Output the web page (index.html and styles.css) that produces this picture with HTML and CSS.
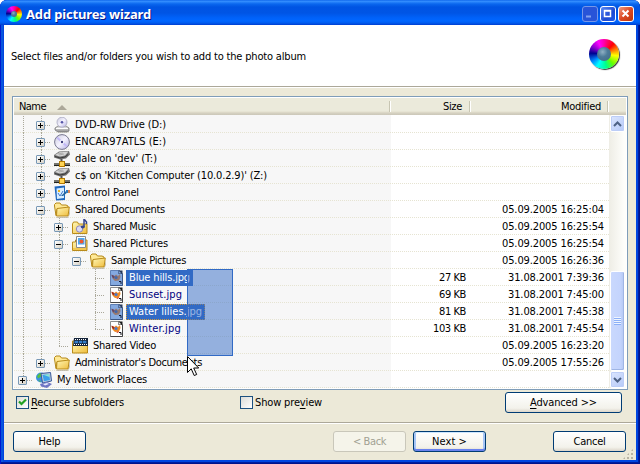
FILE: index.html
```html
<!DOCTYPE html>
<html lang="en">
<head>
<meta charset="utf-8">
<title>Add pictures wizard</title>
<link rel="stylesheet" href="styles.css">
</head>
<body>
<svg class="defs" width="0" height="0">
  <defs>
    <linearGradient id="gold" x1="0" y1="0" x2="1" y2="1"><stop offset="0" stop-color="#fff8b8"/><stop offset="1" stop-color="#efbc3c"/></linearGradient>
    <linearGradient id="disc" x1="0" y1="0" x2="1" y2="1"><stop offset="0" stop-color="#c9c9dc"/><stop offset=".5" stop-color="#f4f2ff"/><stop offset="1" stop-color="#b2aee0"/></linearGradient>
    <linearGradient id="metal" x1="0" y1="0" x2="0" y2="1"><stop offset="0" stop-color="#f2f2f2"/><stop offset="1" stop-color="#8c8c8c"/></linearGradient>
    <symbol id="dvd" viewBox="0 0 16 16"><path d="M1 11l3-2h8l3 2v3l-2 1H4l-3-2z" fill="url(#metal)" stroke="#777" stroke-width=".8"/><path d="M2 11.5h12" stroke="#fff"/><circle cx="8" cy="5.2" r="5" fill="url(#disc)" stroke="#a9a9c0" stroke-width=".8"/><circle cx="8" cy="5.2" r="1.3" fill="#5656a8"/></symbol>
    <symbol id="cd" viewBox="0 0 16 16"><circle cx="8" cy="8" r="7.4" fill="url(#disc)" stroke="#77778e"/><path d="M8 8L3 3.500M8 8l5 4.500" stroke="#c3b9f6" stroke-width="2"/><circle cx="8" cy="8" r="2.200" fill="#f7f7ff"/><circle cx="8" cy="8" r="1.200" fill="#3d3d7d"/></symbol>
    <symbol id="netdrive" viewBox="0 0 16 16"><path d="M0 4l5-3.500L15 0l1 3.500-4 4-6 1-6-2z" fill="#747474"/><path d="M1 4l4.500-2.800 9-.6-3.500 4-5 .8z" fill="#d6d6d6"/><path d="M4 3l5-1M5 4l5-1" stroke="#9a9a9a" stroke-width=".7"/><path d="M1 5.500l5 1.500 5-1 3-2.500" stroke="#3a3a3a" fill="none"/><path d="M7.500 8v3" stroke="#555" stroke-width="2"/><path d="M0 13.500h16" stroke="#222" stroke-width="3"/><path d="M0 13h16" stroke="#c8c8b8"/><rect x="5.500" y="10.500" width="5" height="5" fill="#ffd557" stroke="#b47a00"/></symbol>
    <symbol id="panel" viewBox="0 0 16 16"><path d="M.500 1.500L11 .500v14.500L2 15.500z" fill="#1e67bf"/><path d="M2.500 3.500L10 2.500v10.500l-7 1z" fill="#d8edff"/><path d="M4 8l2 3 3-5" stroke="#3f7ad0" fill="none"/><path d="M4 6h2" stroke="#e9b421" stroke-width="2"/><path d="M7 11l5-5 2 1-5 4z" fill="#23659f"/><path d="M12 5h3v3h-3z" fill="#2f7cc0"/><path d="M14 5h2v3h-2z" fill="#d78354"/></symbol>
    <symbol id="folder" viewBox="0 0 16 16"><path d="M2 15h12l2-8v5l-2 4H3z" fill="#a8a08a" opacity=".6"/><path d="M.5 4V2.500L2 1h4l1.500 2H12L14 4v3H3L2 13.500z" fill="#ffe995" stroke="#b48819"/><path d="M3 6.500L15.300 5 14 14H2.500z" fill="url(#gold)" stroke="#b98b1a"/></symbol>
    <symbol id="music" viewBox="0 0 16 16"><path d="M.500 14.500V5l1-2h4l1 2H15v9.500H.500z" fill="url(#gold)" stroke="#b98b1a"/><circle cx="7.500" cy="10" r="3.200" fill="#dbd8f3" stroke="#8e88bd"/><path d="M12 8V0l2.500 3v2" stroke="#36448e" stroke-width="1.500" fill="none"/><ellipse cx="10.800" cy="8" rx="2" ry="1.400" fill="#36448e"/></symbol>
    <symbol id="pics" viewBox="0 0 16 16"><path d="M.500 14.500V6h3V4H15v10.500z" fill="url(#gold)" stroke="#b98b1a"/><path d="M4.500.500h9v11h-9z" fill="#fff" stroke="#8a8a8a"/><path d="M6 2h6.500v6.500H6z" fill="#4fa8ef"/><circle cx="9.500" cy="5.500" r="2" fill="#ef5630"/><path d="M1 13h13" stroke="#f3c850" stroke-width="2"/></symbol>
    <symbol id="video" viewBox="0 0 16 16"><path d="M.500 15V3h15v12z" fill="url(#gold)" stroke="#b98b1a"/><path d="M2 0h14v8H1z" fill="#15243a"/><path d="M3 1.500h12" stroke="#fff" stroke-dasharray="1 1"/><path d="M2.500 4h12.500" stroke="#347dc8" stroke-width="2.500" stroke-dasharray="3.500 .7"/><path d="M2 6.500h13" stroke="#fff" stroke-dasharray="1 1"/></symbol>
    <symbol id="file" viewBox="0 0 16 16"><path d="M2.500.500h9l3 3v12h-12z" fill="#fff" stroke="#8c8c8c"/><path d="M14.500 4v11.500h-12" fill="none" stroke="#444"/><path d="M10.500.500h4v3.500h-4z" fill="#1c1c1c"/><path d="M11 1v2.500h2.500z" fill="#eee"/><path d="M3.500 5l3 1 1.500-1.500L10 6l2-2 .500 3-1.500 3.500L7 11 4.500 8.500z" fill="#f08a24"/><path d="M3.500 4.500l3 1.500L6 8.500 4 7z" fill="#a62c17"/><path d="M8 11l3-1-1 2z" fill="#d03a1c"/><circle cx="8" cy="7.500" r="1.600" fill="#4a78c9"/><path d="M11 11.500h2V14" stroke="#101018" fill="none"/></symbol>
    <symbol id="filesel" viewBox="0 0 16 16"><path d="M2.500.500h9l3 3v12h-12z" fill="#84a9e0" stroke="#5f7fb4"/><path d="M14.500 4v11.500h-12" fill="none" stroke="#3b5685"/><path d="M10.500.500h4v3.500h-4z" fill="#26395a"/><path d="M11 1v2.500h2.500z" fill="#7ea2d8"/><path d="M3.500 5l3 1 1.500-1.500L10 6l2-2 .500 3-1.500 3.500L7 11 4.500 8.500z" fill="#97796f"/><path d="M3.500 4.500l3 1.500L6 8.500 4 7z" fill="#654869"/><circle cx="8" cy="7.500" r="1.600" fill="#4067ae"/><path d="M11 11.500h2V14" stroke="#101830" fill="none"/></symbol>
    <symbol id="network" viewBox="0 0 16 16"><circle cx="5" cy="5.500" r="5" fill="#3c91e2"/><path d="M1 4l3-3 2 .500-1 3-3 2zM2 8l3 1-1 1z" fill="#57c041"/><path d="M5 1.500L14.500 .500l1 8.500-9 2z" fill="#b9cbe0" stroke="#39599a"/><path d="M6.500 3l6.500-1 1 6-6 1.200z" fill="#3aa0ea"/><path d="M8 3l5-1 .5 3z" fill="#8ee6cf"/><path d="M4 12l7-2 5 2-5 4-6-1.500z" fill="#6f76c4"/><path d="M7 12l4-1 2 1-4 1.500z" fill="#e5e7fb"/></symbol>
  </defs>
</svg>
<div class="window">
  <header class="titlebar">
    <span class="wheel small"></span>
    <h1 class="caption" data-w="125">Add pictures wizard</h1>
    <div class="controls">
      <span class="ctl dim"><svg width="14" height="14"><path d="M3 9.500h5" stroke="#84a2f0" stroke-width="2"/></svg></span>
      <span class="ctl"><svg width="14" height="14"><path d="M3.500 3.500h6v6h-6zM3.500 4h6" fill="none" stroke="#fff" stroke-width="1.500"/></svg></span>
      <span class="ctl close"><svg width="14" height="14"><path d="M3.500 3.500l6 6M9.500 3.500l-6 6" stroke="#fff" stroke-width="2"/></svg></span>
    </div>
  </header>
  <main class="client">
    <section class="banner">
      <p data-w="295">Select files and/or folders you wish to add to the photo album</p>
      <span class="wheel"></span>
    </section>
    <section class="body">
      <div class="list">
        <div class="head">
          <div class="h-name"><span data-w="27">Name</span><i class="sort"></i></div>
          <div class="h-size"><span data-w="19">Size</span></div>
          <div class="h-mod"><span data-w="40">Modified</span></div>
        </div>
        <div class="view">
          <div class="rows" id="rows"></div>
          <div class="scroll">
            <span class="sbtn"><svg width="9" height="6"><path d="M1 5l3.500-3.500L8 5" fill="none" stroke="#4d6185" stroke-width="2"/></svg></span>
            <span class="track"></span>
            <span class="thumb"><i></i></span>
            <span class="sbtn"><svg width="9" height="6"><path d="M1 1l3.500 3.500L8 1" fill="none" stroke="#4d6185" stroke-width="2"/></svg></span>
          </div>
        </div>
      </div>
      <div class="options">
        <label class="opt first"><span class="box"><svg width="9" height="9"><path d="M1 3.500L3.500 6 8 1.500" fill="none" stroke="#21a121" stroke-width="2.200"/></svg></span><span data-w="93"><u>R</u>ecurse subfolders</span></label>
        <label class="opt second"><span class="box"></span><span data-w="67">Show pre<u>v</u>iew</span></label>
        <button class="btn wide"><span data-w="67"><u>A</u>dvanced &gt;&gt;</span></button>
      </div>
    </section>
    <footer class="foot">
      <button class="btn"><span data-w="22">Help</span></button>
      <button class="btn back off"><span data-w="33">&lt; Back</span></button>
      <button class="btn next"><span data-w="35">Next &gt;</span></button>
      <button class="btn cancel"><span data-w="32">Cancel</span></button>
      <i class="grip"></i>
    </footer>
  </main>
  <div class="marquee"></div>
  <svg class="cursor" width="13" height="21" viewBox="0 0 13 21"><path d="M.500.500v16l3.700-3.700 3 6.700 2.500-1-3-6.500h5z" fill="#fff" stroke="#000"/></svg>
</div>
<script src="script.js"></script>
</body>
</html>
```
FILE: styles.css
```css
* { box-sizing: border-box; }
body {
  margin: 0;
  width: 640px;
  height: 464px;
  overflow: hidden;
  background: #fff;
  font: 11px/14px "DejaVu Sans Condensed", "DejaVu Sans", sans-serif;
  font-stretch: condensed;
  color: #000;
}
.defs { position: absolute; }
p, h1 { margin: 0; }
[data-w] { white-space: nowrap; }
svg { display: block; flex: none; }
u { text-underline-offset: 2px; text-decoration-thickness: 1px; }

.window {
  position: relative;
  width: 640px;
  height: 464px;
  padding: 0 4px 4px;
  border-radius: 7px 7px 0 0;
  background: #0046e0;
  box-shadow: inset 1px 0 #0019cf, inset -1px -1px #00138c, inset -2px -2px #001ea0, inset 3px 0 #0855dd;
  overflow: hidden;
}
.titlebar {
  display: flex;
  align-items: center;
  height: 25px;
  margin: 0 -4px;
  padding: 3px 6px 0;
  background: linear-gradient(#0058e6 0, #3a93ff 1px, #2884fb 2px, #0a67ee 4px, #0054e3 7px, #0055e5 13px, #0062fa 18px, #0066ff 21px, #005bee 23px, #003dd0 25px);
}
.caption {
  margin-left: 4px;
  font: bold 13px/18px "Noto Sans", sans-serif;
  color: #fff;
  text-shadow: 1px 1px #0a1883;
}
.controls { display: flex; gap: 2px; margin: 0 0 0 auto; }
.ctl {
  width: 16px;
  height: 16px;
  border: 1px solid #fff;
  border-radius: 3px;
  background: linear-gradient(135deg, #5c8bf5, #1d49d2 60%, #1f5cec);
}
.ctl.dim { border-color: #7797e8; background: #2854d8; }
.ctl.close { background: linear-gradient(135deg, #f19a80, #dc4a24 50%, #bc3309); }
.wheel {
  display: flex;
  flex: none;
  align-items: center;
  justify-content: center;
  width: 30px;
  height: 30px;
  border-radius: 50%;
  background: conic-gradient(#f0a 0, #f00 12%, #ff6a00 18%, #ff0 27%, #6f0 38%, #0f8 47%, #0ff 58%, #08f 66%, #000090 76%, #80c 84%, #f0f 93%, #f0a);
  box-shadow: 1px 1px 1px #333;
}
.wheel::after {
  content: "";
  width: 14px;
  height: 14px;
  border-radius: 50%;
  background: radial-gradient(circle at 40% 35%, #8fb0c4, #4d7b99 40%, #416880);
}
.wheel.small { width: 16px; height: 16px; box-shadow: none; }
.wheel.small::after { width: 6px; height: 6px; }

.client { height: 435px; background: #ece9d8; }
.banner {
  display: flex;
  align-items: center;
  justify-content: space-between;
  height: 62px;
  padding: 0 17px 3px 7px;
  background: #fff;
  border-bottom: 1px solid #aca899;
}
.banner p { padding-top: 5px; }
.body {
  height: 335px;
  padding: 8px 8px 0;
  border-top: 1px solid #fff;
}
.list {
  width: 616px;
  height: 294px;
  border: 1px solid #7f9db9;
  padding: 1px;
  background: #fff;
}
.head {
  display: flex;
  height: 17px;
  background: linear-gradient(#ebeadb 13px, #e2decd 14px, #d6d2c2 15px, #cbc7b8 17px);
}
.head > div {
  display: flex;
  align-items: center;
  position: relative;
  padding-top: 1px;
}
.head > div::after {
  content: "";
  position: absolute;
  right: 0;
  top: 3px;
  width: 2px;
  height: 11px;
  background: linear-gradient(90deg, #c7c5b2 50%, #fff 50%);
}
.h-name { width: 377px; padding-left: 5px; }
.h-size { width: 80px; justify-content: flex-end; padding-right: 9px; }
.h-mod { width: 138px; justify-content: flex-end; padding-right: 8px; }
.sort {
  margin-left: 11px;
  border: 5px solid transparent;
  border-top: 0;
  border-bottom-color: #aca899;
}
.view { display: flex; height: 273px; }
.rows {
  width: 595px;
  padding-top: 1px;
  background: linear-gradient(90deg, #f7f7f7 377px, #fff 377px);
}
.row {
  display: flex;
  height: 17px;
  align-items: center;
  background: repeating-linear-gradient(90deg, #e6e4d2 0 1px, transparent 1px 2px) 0 100% / 100% 1px no-repeat;
}
.name { display: flex; align-items: center; width: 377px; height: 17px; }
.size { width: 75px; display: flex; justify-content: flex-end; }
.date { width: 138px; display: flex; justify-content: flex-end; }
.cell { flex: none; position: relative; width: 18px; height: 17px; }
.cell.v, .cell.end {
  background: repeating-linear-gradient(#aaa89a 0 1px, transparent 1px 2px) 9px 0 / 1px 100% no-repeat;
}
.cell.end { background-size: 1px 9px; }
.cell.tick::before {
  content: "";
  position: absolute;
  left: 9px;
  top: 9px;
  width: 10px;
  height: 1px;
  background: repeating-linear-gradient(90deg, #aaa89a 0 1px, transparent 1px 2px);
}
.pm {
  position: absolute;
  left: 4px;
  top: 5px;
  width: 9px;
  height: 9px;
  border: 1px solid #7898b5;
  border-radius: 1px;
  background: linear-gradient(#000, #000) 1px 3px / 5px 1px no-repeat, linear-gradient(135deg, #fff, #d5d0c4);
}
.pm.plus {
  background: linear-gradient(#000, #000) 1px 3px / 5px 1px no-repeat, linear-gradient(#000, #000) 3px 1px / 1px 5px no-repeat, linear-gradient(135deg, #fff, #d5d0c4);
}
.icon { margin: 1px 2px 0 4px; width: 16px; height: 16px; }
.text { height: 16px; line-height: 15px; padding: 0 3px; }
.text.jpg { color: #000080; }
.text.sel { background: #316ac5; color: #fff; }
.text.focus { outline: 1px dotted #ce953a; outline-offset: -1px; }

.scroll {
  display: flex;
  flex-direction: column;
  width: 17px;
  padding: 0 1px;
  background: linear-gradient(90deg, #eeede5, #fefefb 90%);
}
.sbtn, .thumb {
  display: flex;
  align-items: center;
  justify-content: center;
  width: 15px;
  height: 17px;
  border: 1px solid #fff;
  border-radius: 2px;
  background: linear-gradient(135deg, #dce6ff, #b5c9f8);
  box-shadow: inset 0 0 0 1px #bccdf7;
}
.track { height: 139px; }
.thumb { height: 100px; background: linear-gradient(90deg, #c9d8fd, #c4d4fd 70%, #b3c7f3); box-shadow: inset -1px -1px #9fb5e5; }
.thumb i { width: 7px; height: 8px; background: repeating-linear-gradient(#eef4fe 0 1px, #8cb0f8 1px 2px); }

.options { display: flex; padding-top: 2px; }
.opt { display: flex; gap: 3px; height: 13px; align-items: center; margin-top: 4px; }
.opt.first { width: 224px; margin-left: 4px; }
.opt.second { width: 265px; }
.box {
  display: flex;
  align-items: center;
  justify-content: center;
  width: 13px;
  height: 13px;
  margin-right: -1px;
  border: 1px solid #1c5180;
  background: linear-gradient(135deg, #dcdcd7, #fff);
}
.btn {
  display: flex;
  align-items: center;
  justify-content: center;
  flex: none;
  width: 73px;
  height: 21px;
  padding: 0;
  border: 1px solid #003c74;
  border-radius: 3px;
  background: linear-gradient(#fff, #f3f2eb 80%, #dcd6ca);
  font: inherit;
  color: #000;
}
.wide { width: 117px; }
.foot {
  display: flex;
  height: 38px;
  padding: 8px 0 0 9px;
  border-top: 1px solid #aca899;
  box-shadow: inset 0 1px #fff;
  position: relative;
}
.back { margin-left: 247px; }
.next { margin-left: 7px; box-shadow: inset 0 1px #cee7ff, inset 0 -2px #6982ee, inset 2px 0 #a6c5f6, inset -2px 0 #a6c5f6; }
.cancel { margin-left: 67px; }
.off { color: #a1a192; border-color: #c9c7ba; background: #f5f4ea; }
.grip {
  position: absolute;
  right: 1px;
  bottom: 1px;
  width: 12px;
  height: 12px;
  background: conic-gradient(from 0deg at 50% 50%, #b8b4a3 0 25%, transparent 0) -2px 2px / 4px 4px;
  clip-path: polygon(100% 0, 100% 100%, 0 100%);
}
.marquee {
  position: absolute;
  left: 187px;
  top: 269px;
  width: 46px;
  height: 87px;
  border: 1px solid #316ac5;
  background: rgba(49, 106, 197, .5);
}
.cursor { position: absolute; left: 187px; top: 356px; }
```
FILE: script.js
```js
// g: one letter per indent cell. v = guide line, x = blank, t = tick, e = last tick,
// p/m = plus/minus box on a continuing line, P/M = plus/minus box with no line below.
const data = [
  { g: 'vp', icon: 'dvd', text: 'DVD-RW Drive (D:)', w: 91 },
  { g: 'vp', icon: 'cd', text: 'ENCAR97ATLS (E:)', w: 91 },
  { g: 'vp', icon: 'netdrive', text: "dale on 'dev' (T:)", w: 82 },
  { g: 'vp', icon: 'netdrive', text: "c$ on 'Kitchen Computer (10.0.2.9)' (Z:)", w: 192 },
  { g: 'vp', icon: 'panel', text: 'Control Panel', w: 64 },
  { g: 'vm', icon: 'folder', text: 'Shared Documents', w: 90, date: '05.09.2005 16:25:04' },
  { g: 'vvp', icon: 'music', text: 'Shared Music', w: 63, date: '05.09.2005 16:25:54' },
  { g: 'vvm', icon: 'pics', text: 'Shared Pictures', w: 75, date: '05.09.2005 16:25:54' },
  { g: 'vvvM', icon: 'folder', text: 'Sample Pictures', w: 75, date: '05.09.2005 16:26:36' },
  { g: 'vvvxt', icon: 'filesel', text: 'Blue hills.jpg', w: 61, size: '27 KB', sw: 27, date: '31.08.2001 7:39:36', cls: 'jpg sel' },
  { g: 'vvvxt', icon: 'file', text: 'Sunset.jpg', w: 53, size: '69 KB', sw: 27, date: '31.08.2001 7:45:00', cls: 'jpg' },
  { g: 'vvvxt', icon: 'filesel', text: 'Water lilies.jpg', w: 73, size: '81 KB', sw: 27, date: '31.08.2001 7:45:38', cls: 'jpg sel focus' },
  { g: 'vvvxe', icon: 'file', text: 'Winter.jpg', w: 52, size: '103 KB', sw: 33, date: '31.08.2001 7:45:54', cls: 'jpg' },
  { g: 'vve', icon: 'video', text: 'Shared Video', w: 63, date: '05.09.2005 16:23:20' },
  { g: 'vP', icon: 'folder', text: "Administrator's Documents", w: 127, date: '05.09.2005 17:55:26' },
  { g: 'P', icon: 'network', text: 'My Network Places', w: 90 }
];

function cell(c) {
  const kinds = { v: 'v', x: '', t: 'v tick', e: 'end tick', p: 'v tick', m: 'v tick', P: 'end tick', M: 'tick' };
  const sign = /[pP]/.test(c) ? '<i class="pm plus"></i>' : /[mM]/.test(c) ? '<i class="pm"></i>' : '';
  return `<span class="cell ${kinds[c]}">${sign}</span>`;
}

document.getElementById('rows').innerHTML = data.map(r => {
  const size = r.size ? `<span data-w="${r.sw}">${r.size}</span>` : '';
  const date = r.date ? `<span data-w="${r.date.length === 19 ? 102 : 96}">${r.date}</span>` : '';
  return `<div class="row"><div class="name">${[...r.g].map(cell).join('')}` +
    `<svg class="icon"><use href="#${r.icon}"/></svg>` +
    `<span class="text ${r.cls || ''}"><span data-w="${r.w}">${r.text}</span></span></div>` +
    `<div class="size">${size}</div><div class="date">${date}</div></div>`;
}).join('');

// Track each label so that it takes its nominal width.
document.querySelectorAll('[data-w]').forEach(el => {
  const range = document.createRange();
  range.selectNodeContents(el);
  const gap = el.dataset.w - range.getBoundingClientRect().width;
  el.style.letterSpacing = gap / el.textContent.length + 'px';
});
```
